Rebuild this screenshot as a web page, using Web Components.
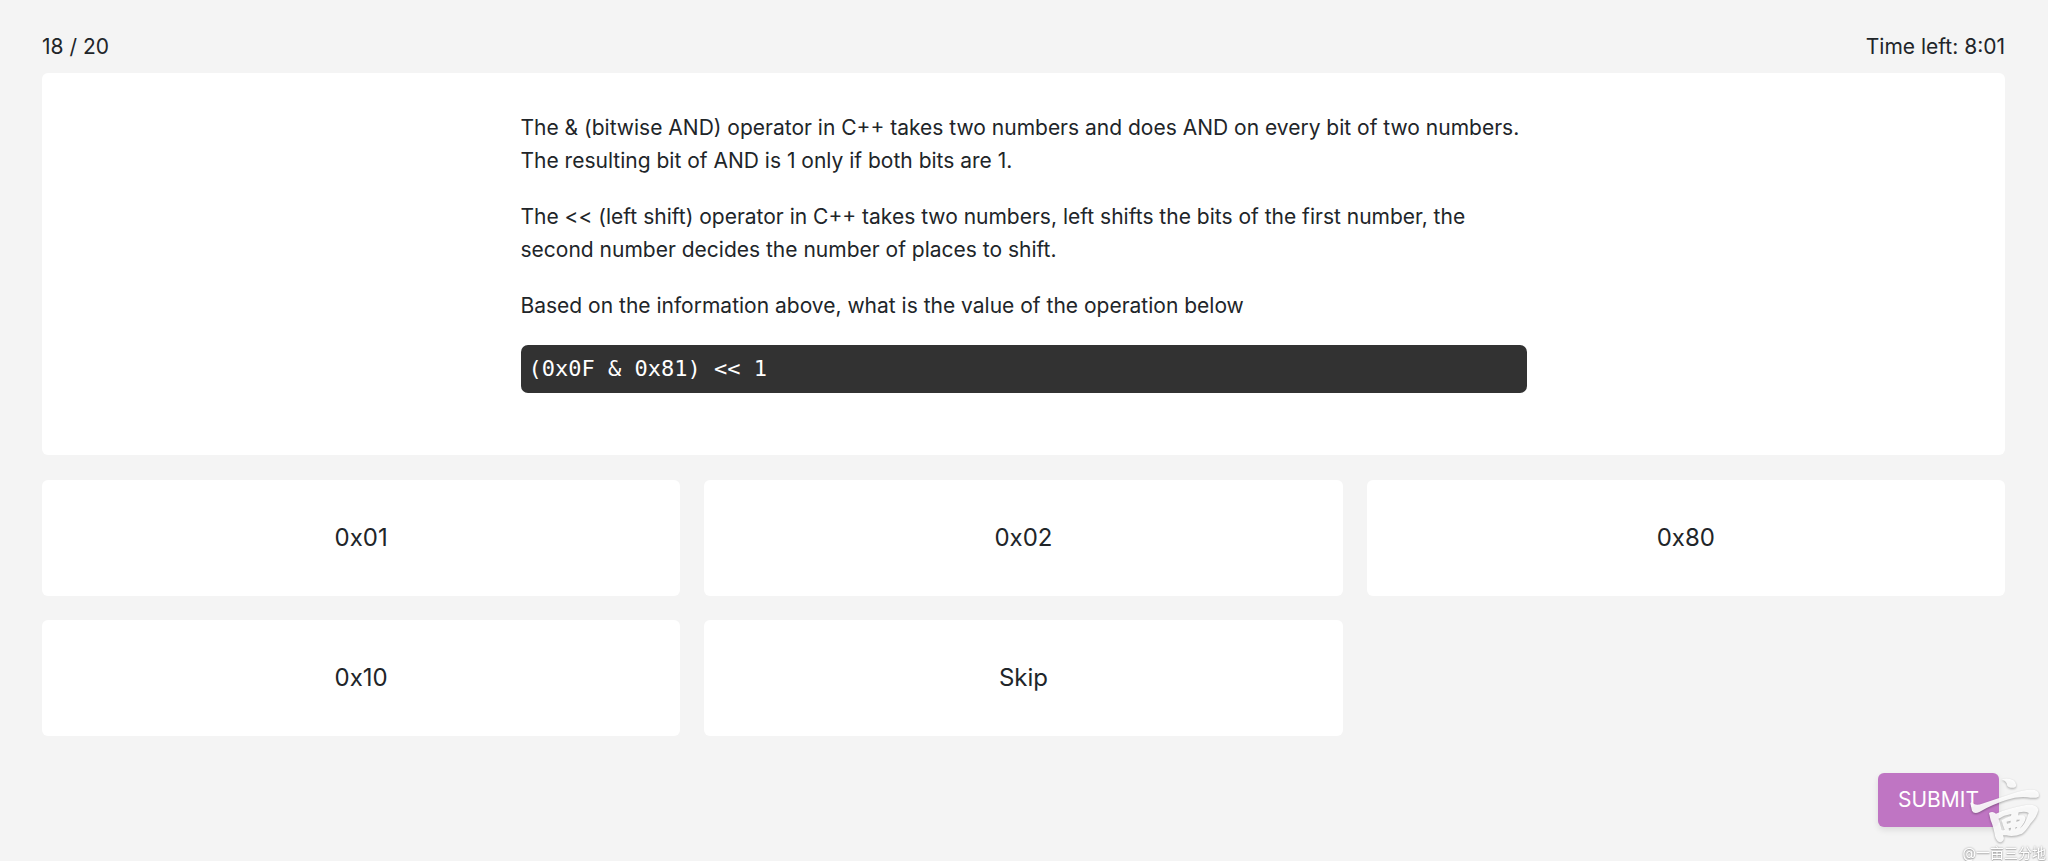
<!DOCTYPE html>
<html lang="en">
<head>
<meta charset="utf-8">
<meta name="viewport" content="width=device-width, initial-scale=1">
<title>Quiz</title>
<style>
  html { background: #f4f4f4; }
  body { margin: 0; color: #212529; font: 21px/32px Inter, "Noto Sans CJK SC", sans-serif; }
</style>
</head>
<body>
<quiz-page>
  <quiz-status slot="status"><span slot="progress">18 / 20</span><span slot="time">Time left: 8:01</span></quiz-status>
  <quiz-question slot="question">
    <p>The &amp; (bitwise AND) operator in C++ takes two numbers and does AND on every bit of two numbers. The resulting bit of AND is 1 only if both bits are 1.</p>
    <p>The &lt;&lt; (left shift) operator in C++ takes two numbers, left shifts the bits of the first number, the second number decides the number of places to shift.</p>
    <p>Based on the information above, what is the value of the operation below</p>
    <code-block>(0x0F &amp; 0x81) &lt;&lt; 1</code-block>
  </quiz-question>
  <quiz-option>0x01</quiz-option>
  <quiz-option>0x02</quiz-option>
  <quiz-option>0x80</quiz-option>
  <quiz-option>0x10</quiz-option>
  <quiz-option>Skip</quiz-option>
  <submit-button slot="actions">SUBMIT</submit-button>
</quiz-page>
<site-watermark>@一亩三分地</site-watermark>

<script>
  const define = (name, html) => {
    const template = document.createElement('template');
    template.innerHTML = html;
    customElements.define(name, class extends HTMLElement {
      constructor() {
        super();
        this.attachShadow({ mode: 'open' }).append(template.content.cloneNode(true));
      }
    });
  };

  define('quiz-page', `
    <style>
      :host { display: block; padding: 31px 43px 24px 42px; }
      .options { display: grid; grid-template-columns: repeat(3, 1fr); gap: 24px; margin-top: 25px; }
      .actions { display: flex; justify-content: flex-end; margin-top: 37px; padding-right: 6px; }
    </style>
    <main>
      <slot name="status"></slot>
      <slot name="question"></slot>
      <div class="options"><slot></slot></div>
      <div class="actions"><slot name="actions"></slot></div>
    </main>`);

  define('quiz-status', `
    <style>
      :host { display: flex; justify-content: space-between; margin-bottom: 10px; }
    </style>
    <slot name="progress"></slot><slot name="time"></slot>`);

  define('quiz-question', `
    <style>
      :host { display: block; background: #fff; border-radius: 6px; padding: 38px 24px 62px; line-height: 33px; }
      .body { max-width: 1006px; margin: 0 auto; }
      ::slotted(p) { margin: 0 0 23px; }
    </style>
    <section class="body"><slot></slot></section>`);

  define('code-block', `
    <style>
      :host { display: block; background: #323232; color: #fff; border-radius: 7px; padding: 8px; }
      pre { margin: 0; font: 22px/32px "DejaVu Sans Mono", monospace; }
      code { font: inherit; }
    </style>
    <pre><code><slot></slot></code></pre>`);

  define('quiz-option', `
    <style>
      :host { display: block; }
      button { display: block; width: 100%; border: 0; border-radius: 6px; background: #fff; color: inherit;
        font: inherit; font-size: 24px; padding: 42px 24px; cursor: pointer; }
    </style>
    <button type="button"><slot></slot></button>`);

  define('submit-button', `
    <style>
      :host { display: block; }
      button { display: block; border: 0; border-radius: 6px; background: #bf75c3; color: #fff; font: inherit;
        padding: 11px 20px; box-shadow: 0 3px 6px rgba(0, 0, 0, .1); cursor: pointer; }
    </style>
    <button type="submit"><slot></slot></button>`);

  define('site-watermark', `
    <style>
      :host { position: fixed; right: 0; bottom: 0; display: flex; flex-direction: column; align-items: flex-end;
        pointer-events: none; color: #fff; font-size: 14px; line-height: 17px; }
      svg { display: block; width: 88px; height: 74px; filter: drop-shadow(0 1px 1px rgba(0, 0, 0, .35)); }
      span { padding-right: 2px; text-shadow: 0 0 2px #888, 0 1px 1px #bbb; }
    </style>
    <svg viewBox="0 0 264 222" aria-hidden="true" fill="#fff" fill-opacity=".9">
      <path d="M125 28 Q145 22 160 31 Q172 40 167 50 Q160 56 147 52 Q140 48 140 40 Q137 32 125 28Z"/>
      <path d="M31 100 Q35 93 42 102 Q52 107 66 101 L160 70 Q198 56 224 60 Q240 66 236 80 Q226 86 202 82 Q172 79 139 90 Q95 104 58 126 Q42 133 36 122Z"/>
      <path fill-rule="evenodd" d="M87 129 Q98 122 108 131 Q145 114 198 105 Q230 102 235 119 Q232 139 211 161 Q198 182 186 191 Q160 202 139 196 L129 196 Q136 211 123 217 Q112 218 106 202 Q100 169 92 151Z
        M116 146 Q121 162 125 180 Q131 182 134 179 Q128 167 125 151 Q139 142 153 138 L154 132 Q131 136 116 146Z
        M176 127 L174 136 L190 136 Q201 143 192 158 Q184 170 179 176 Q196 164 206 129 Q197 123 176 127Z
        M140 155 L141 162 L151 159 L152 152Z
        M170 149 L169 156 L177 153 L180 149Z
        M146 175 L147 182 L152 181 L153 173Z
        M167 171 L166 178 L172 172Z"/>
    </svg>
    <span><slot></slot></span>`);
</script>
</body>
</html>
